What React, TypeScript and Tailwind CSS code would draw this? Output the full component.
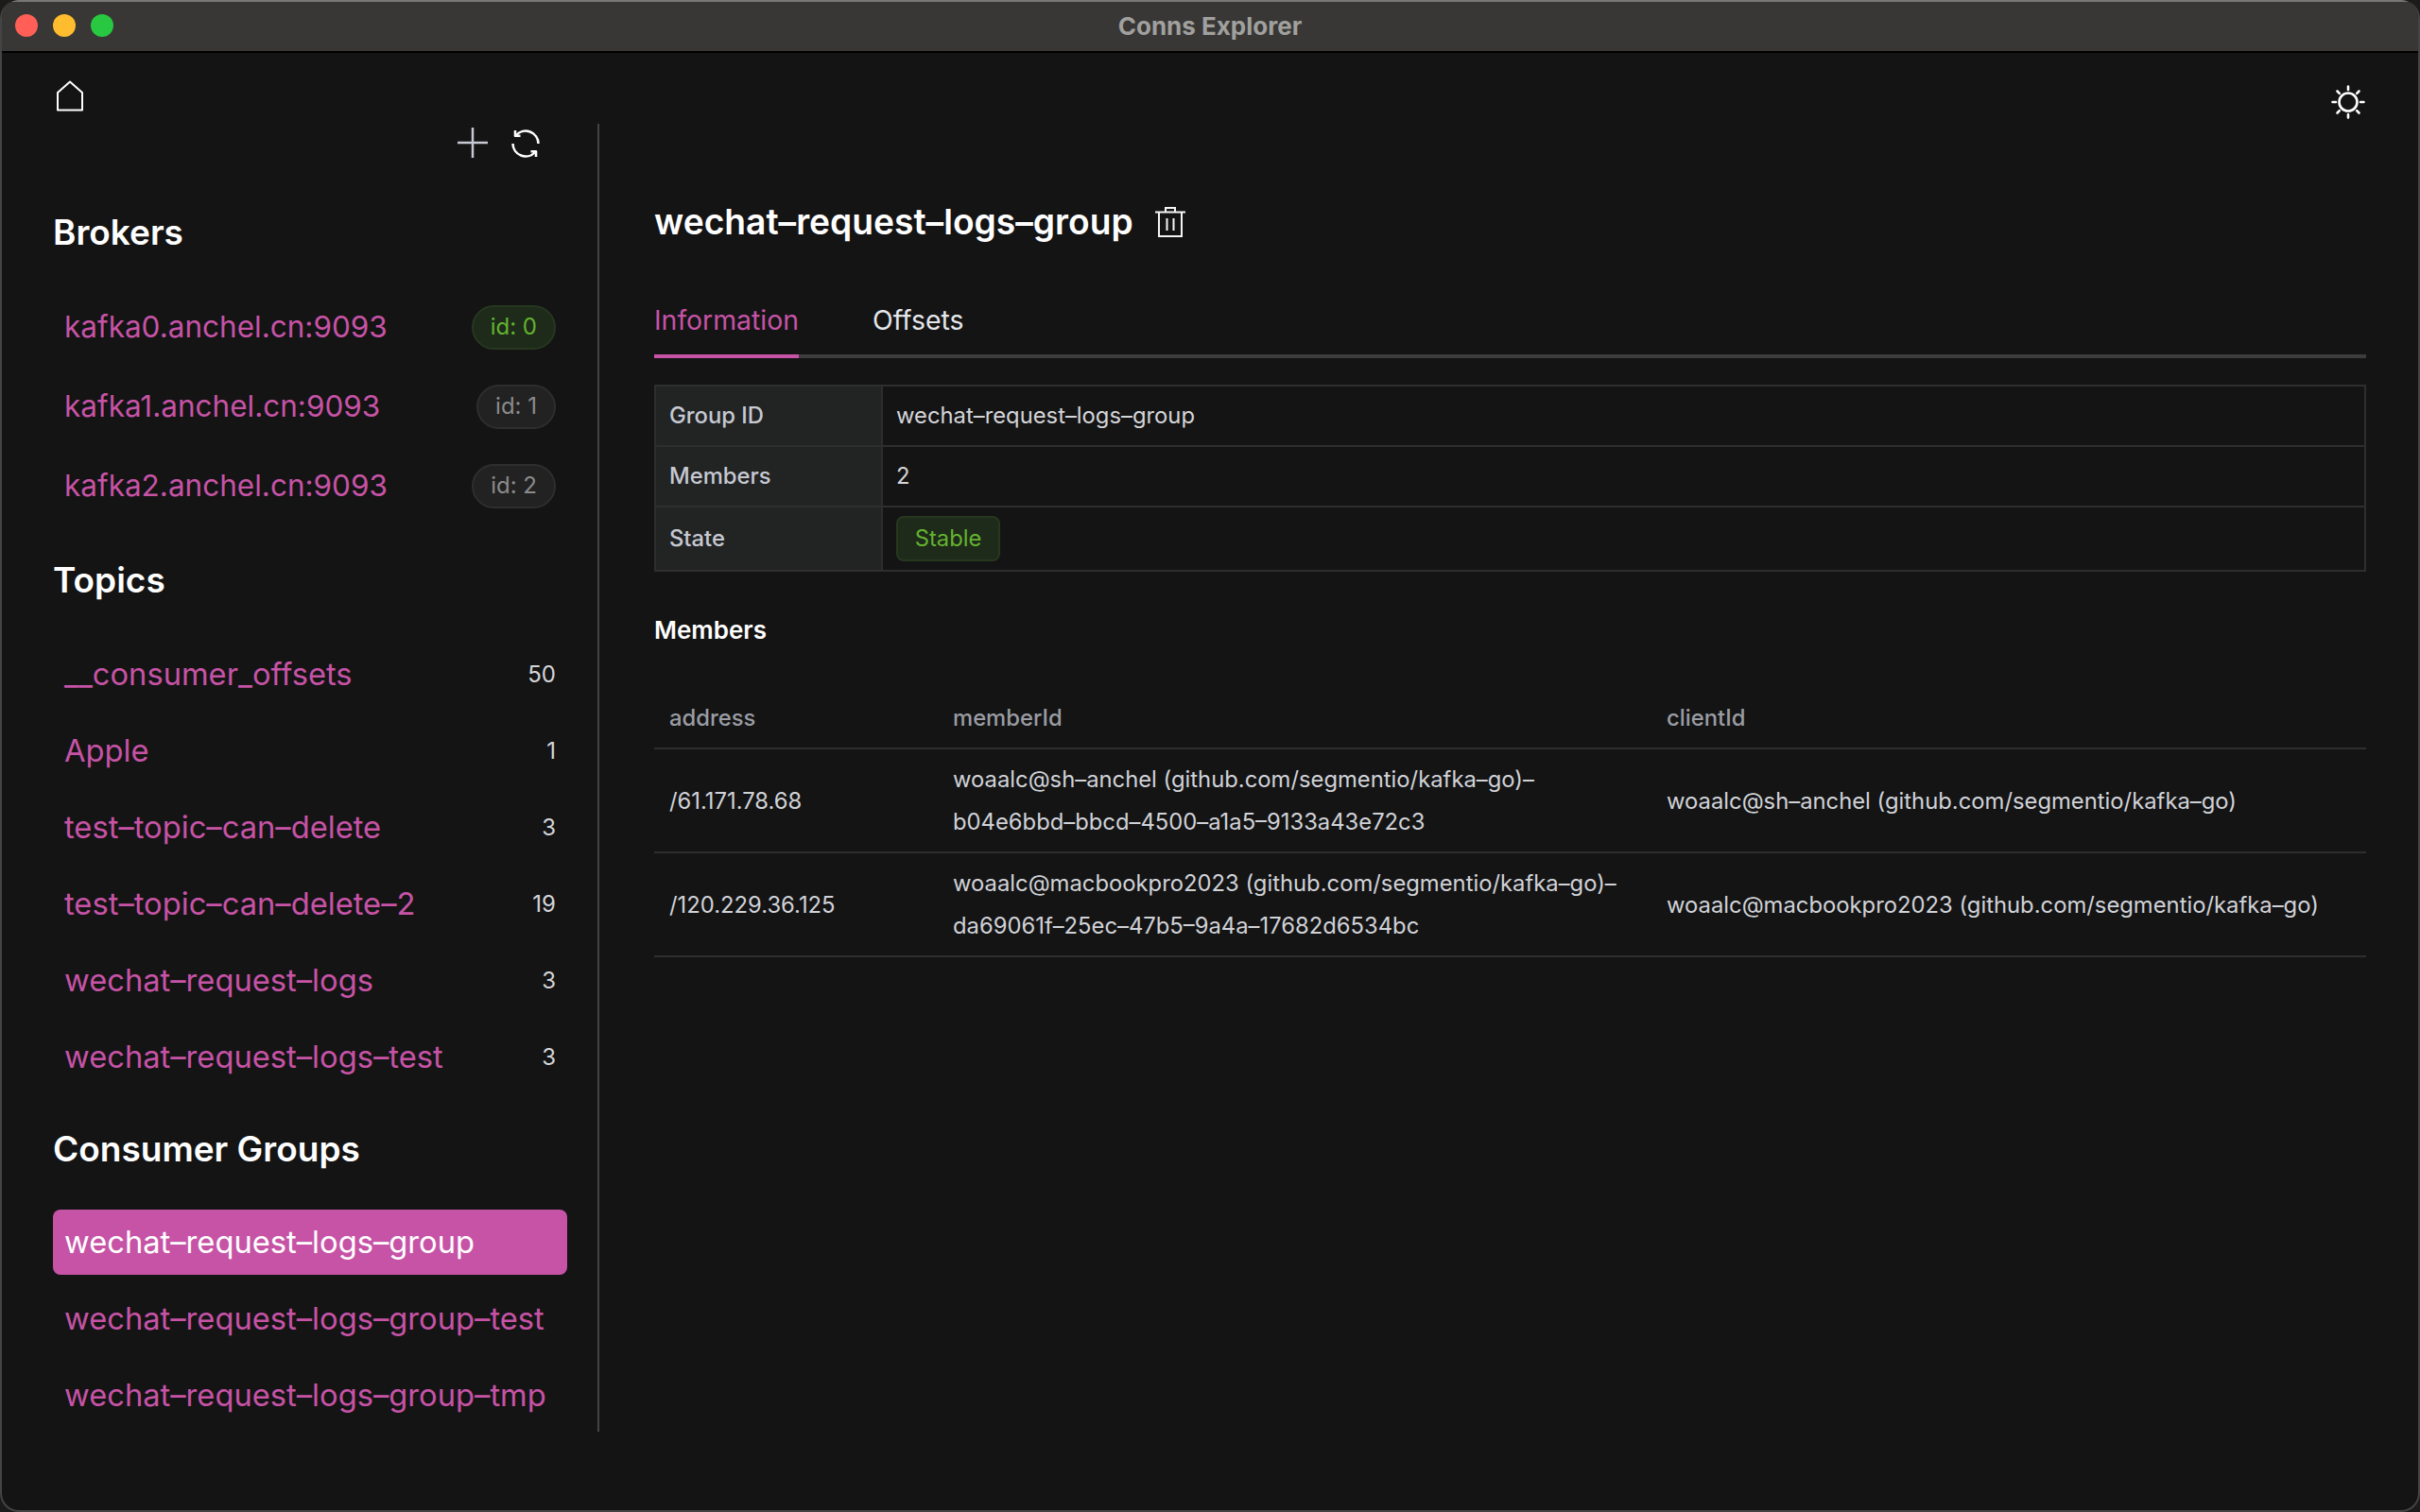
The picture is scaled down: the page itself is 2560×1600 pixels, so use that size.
import React from "react";

const FONT = "font-['Inter','Noto_Sans','Liberation_Sans',sans-serif]";

const BROKERS = [
  { host: "kafka0.anchel.cn:9093", id: 0, active: true },
  { host: "kafka1.anchel.cn:9093", id: 1, active: false },
  { host: "kafka2.anchel.cn:9093", id: 2, active: false },
];

const TOPICS = [
  { name: "__consumer_offsets", count: 50 },
  { name: "Apple", count: 1 },
  { name: "test–topic–can–delete", count: 3 },
  { name: "test–topic–can–delete–2", count: 19 },
  { name: "wechat–request–logs", count: 3 },
  { name: "wechat–request–logs–test", count: 3 },
];

const GROUPS = ["wechat–request–logs–group", "wechat–request–logs–group–test", "wechat–request–logs–group–tmp"];

const MEMBERS = [
  {
    address: "/61.171.78.68",
    memberId: ["woaalc@sh–anchel (github.com/segmentio/kafka–go)–", "b04e6bbd–bbcd–4500–a1a5–9133a43e72c3"],
    clientId: "woaalc@sh–anchel (github.com/segmentio/kafka–go)",
  },
  {
    address: "/120.229.36.125",
    memberId: ["woaalc@macbookpro2023 (github.com/segmentio/kafka–go)–", "da69061f–25ec–47b5–9a4a–17682d6534bc"],
    clientId: "woaalc@macbookpro2023 (github.com/segmentio/kafka–go)",
  },
];

function HomeIcon() {
  return (
    <svg width="30" height="33" viewBox="0 0 30 33" fill="none" stroke="#fff" strokeWidth="2">
      <path d="M2 13 15 1.5 28 13V31.5H2Z" strokeLinejoin="round" />
    </svg>
  );
}

function PlusIcon() {
  return (
    <svg width="32" height="32" viewBox="0 0 32 32" fill="none" stroke="#c6c9d3" strokeWidth="2.5">
      <path d="M16 0V32M0 16H32" />
    </svg>
  );
}

function RefreshIcon() {
  return (
    <svg width="30" height="30" viewBox="0 0 30 30" fill="none" stroke="#fff" strokeWidth="2.6" strokeLinejoin="round">
      <path d="M28.5 15A13.5 13.5 0 0 0 5 6" />
      <path d="M1.5 15A13.5 13.5 0 0 0 25 24" />
      <path d="M4 1V6.7H9.5" />
      <path d="M26 29V23.3H20.5" />
    </svg>
  );
}

function SunIcon() {
  return (
    <svg width="36" height="36" viewBox="0 0 36 36" fill="none" stroke="#fff" strokeWidth="2.6" strokeLinecap="round">
      <circle cx="18" cy="18" r="9.5" />
      <path d="M18 1.5V5M18 31V34.5M1.5 18H5M31 18H34.5M6.5 6.5 8.8 8.8M27.2 27.2 29.5 29.5M6.5 29.5 8.8 27.2M27.2 8.8 29.5 6.5" />
    </svg>
  );
}

function TrashIcon() {
  return (
    <svg width="32" height="32" viewBox="0 0 32 32" fill="none" stroke="#f3f4f6" strokeWidth="2">
      <path d="M0 5.5H32M4 5.5V31H28V5.5M11 5.5V1H21V5.5M12.5 12V25M19.5 12V25" />
    </svg>
  );
}

function SectionTitle({ children, className }: { children: React.ReactNode; className: string }) {
  return <h2 className={`text-[37px] leading-[48px] font-semibold text-white ${className}`}>{children}</h2>;
}

function App() {
  return (
    <div className={`${FONT} h-[1600px] w-[2560px] overflow-hidden bg-[#1b1b1b]`}>
      <div className="flex h-full flex-col overflow-hidden rounded-[20px] border-2 border-t-0 border-[#444444] bg-[#141414]">
        {/* title bar */}
        <div className="relative flex h-[56px] shrink-0 items-center justify-center border-t-2 border-b-2 border-t-[#777777] border-b-black bg-[#383735] pb-0.5">
          <div className="absolute left-[14px] flex gap-4">
            <span className="h-6 w-6 rounded-full bg-[#ff5f57]" />
            <span className="h-6 w-6 rounded-full bg-[#febc2e]" />
            <span className="h-6 w-6 rounded-full bg-[#28c840]" />
          </div>
          <span className="text-[26px] font-bold text-[#a0a09e]">Conns Explorer</span>
        </div>

        {/* top bar */}
        <div className="flex h-[75px] shrink-0 items-start justify-between pr-[56px] pl-[57px]">
          <div className="mt-[29px]">
            <HomeIcon />
          </div>
          <div className="mt-[34px]">
            <SunIcon />
          </div>
        </div>

        <div className="flex min-h-0 flex-1 items-start">
          {/* sidebar */}
          <div className="h-[1384px] w-[632px] shrink-0 border-r-2 border-[#444444] pr-[32px] pl-[54px]">
            <div className="flex h-[36px] items-end justify-end gap-[25px] pr-[29px]">
              <PlusIcon />
              <RefreshIcon />
            </div>
            <SectionTitle className="mt-[55px]">Brokers</SectionTitle>
            <div className="mt-[34px] flex flex-col">
              {BROKERS.map((b) => (
                <div key={b.id} className="flex h-[84px] items-center justify-between pr-3 pl-3">
                  <span className="text-[31.5px] text-[#c653a6]">{b.host}</span>
                  <span
                    className={`flex h-[47px] items-center rounded-full border-2 px-[18px] text-[24px] ${
                      b.active ? "border-[#26381f] bg-[#1e2a1a] text-[#63b32f]" : "border-[#2e2e2e] bg-[#222222] text-[#8b8b8b]"
                    }`}
                  >
                    id: {b.id}
                  </span>
                </div>
              ))}
            </div>
            <SectionTitle className="mt-[34px]">Topics</SectionTitle>
            <div className="mt-[41px] flex flex-col gap-3">
              {TOPICS.map((t) => (
                <div key={t.name} className="flex h-[69px] items-center justify-between pr-3 pl-3">
                  <span className="text-[32.7px] text-[#c653a6]">{t.name}</span>
                  <span className="text-[24px] text-[#d4d5d9]">{t.count}</span>
                </div>
              ))}
            </div>
            <SectionTitle className="mt-[39px]">Consumer Groups</SectionTitle>
            <div className="mt-[40px] flex flex-col gap-3">
              {GROUPS.map((g, i) => (
                <div
                  key={g}
                  className={`flex h-[69px] items-center rounded-lg pl-3 text-[32.7px] ${
                    i === 0 ? "bg-[#c653a6] text-white" : "text-[#c653a6]"
                  }`}
                >
                  {g}
                </div>
              ))}
            </div>
          </div>

          {/* detail pane */}
          <div className="min-w-0 flex-1 pr-[55px] pl-[58px]">
            <div className="mt-[78px] flex items-center gap-[23px]">
              <h1 className="text-[37.2px] leading-[52px] font-semibold text-white">wechat–request–logs–group</h1>
              <TrashIcon />
            </div>

            <div className="mt-[52px] flex h-[66px] gap-[78px] border-b-4 border-[#3d3d3d] text-[28.4px] leading-[52px]">
              <span className="-mb-1 h-[66px] border-b-4 border-[#c653a6] text-[#c653a6]">Information</span>
              <span className="text-[#e5e7eb]">Offsets</span>
            </div>

            <table className="mt-7 w-full border-collapse border-2 border-[#2e2e2e] text-[23.8px]">
              <tbody>
                <tr className="h-[64px] border-b-2 border-[#2e2e2e]">
                  <td className="w-[240px] border-r-2 border-[#2e2e2e] bg-[#222424] px-[14px] font-medium text-[#c6c9d2]">Group ID</td>
                  <td className="px-[14px] text-[#d4d5d9]">wechat–request–logs–group</td>
                </tr>
                <tr className="h-[64px] border-b-2 border-[#2e2e2e]">
                  <td className="border-r-2 border-[#2e2e2e] bg-[#222424] px-[14px] font-medium text-[#c6c9d2]">Members</td>
                  <td className="px-[14px] text-[#d4d5d9]">2</td>
                </tr>
                <tr className="h-[68px]">
                  <td className="border-r-2 border-[#2e2e2e] bg-[#222424] px-[14px] font-medium text-[#c6c9d2]">State</td>
                  <td className="px-[14px]">
                    <span className="inline-flex h-[48px] w-[110px] items-center justify-center rounded-lg border-2 border-[#26381f] bg-[#1e2a1a] align-middle text-[#63b32f]">
                      Stable
                    </span>
                  </td>
                </tr>
              </tbody>
            </table>

            <h3 className="mt-[47px] text-[26px] leading-[30px] font-semibold text-white">Members</h3>

            <table className="mt-[48px] w-full border-collapse text-[23.8px] leading-[45px]">
              <thead>
                <tr className="h-[62px] border-b-2 border-[#2e2e2e] text-left text-[#9a9ca3]">
                  <th className="w-[300px] px-4 pb-[3px] font-medium">address</th>
                  <th className="w-[755px] px-4 pb-[3px] font-medium">memberId</th>
                  <th className="px-4 pb-[3px] font-medium">clientId</th>
                </tr>
              </thead>
              <tbody className="text-[#d0d2d8]">
                {MEMBERS.map((m) => (
                  <tr key={m.address} className="h-[110px] border-b-2 border-[#2e2e2e]">
                    <td className="px-4">{m.address}</td>
                    <td className="px-4">
                      {m.memberId.map((line) => (
                        <div key={line}>{line}</div>
                      ))}
                    </td>
                    <td className="px-4">{m.clientId}</td>
                  </tr>
                ))}
              </tbody>
            </table>
          </div>
        </div>
      </div>
    </div>
  );
}

export default App;
